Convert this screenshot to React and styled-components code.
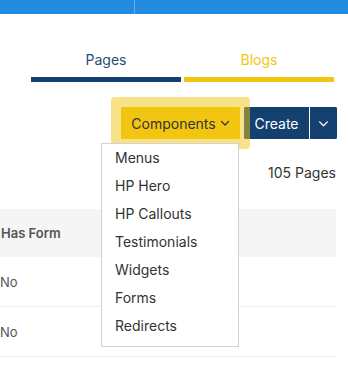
import React from "react";
import styled, { createGlobalStyle } from "styled-components";

const GlobalStyle = createGlobalStyle`
  html, body { margin: 0; padding: 0; background: #fff; }
  body { font-family: Inter, "Noto Sans", Arial, sans-serif; color: #333; }
  * { box-sizing: border-box; }
`;

const TopBar = styled.div`
  display: flex;
  height: 14px;
  background: #238bdf;
`;

const TopSegment = styled.div`
  width: 135px;
  border-right: 1px solid rgba(255, 255, 255, 0.3);
`;

const Tabs = styled.div`
  display: flex;
  gap: 3px;
  margin-top: 36px;
  padding-left: 31px;
`;

const Tab = styled.div`
  width: 150px;
  text-align: center;
  font-size: 14px;
  line-height: 20px;
  padding-bottom: 7px;
  color: ${(p) => p.$color};
  border-bottom: 5px solid ${(p) => p.$bar};
`;

const Toolbar = styled.div`
  display: flex;
  justify-content: flex-end;
  gap: 4px;
  margin-top: 25px;
  padding-right: 11px;
`;

const DropWrap = styled.div`
  position: relative;
  z-index: 2;
`;

const ComponentsButton = styled.button`
  display: flex;
  align-items: center;
  justify-content: center;
  gap: 4px;
  width: 119px;
  height: 32px;
  border: none;
  border-radius: 1px;
  background: #f2c511;
  color: #333;
  font-family: inherit;
  font-size: 14px;
  box-shadow: 0 0 0 10px rgba(242, 197, 17, 0.5);
  padding: 0;
`;

const Menu = styled.ul`
  position: absolute;
  left: -20px;
  top: 36px;
  width: 138px;
  margin: 0;
  padding: 0 0 6px;
  list-style: none;
  background: #fff;
  border: 1px solid #d2d2d2;
`;

const MenuItem = styled.li`
  padding-left: 13px;
  font-size: 14px;
  line-height: 28px;
  color: #333;
`;

const SplitGroup = styled.div`
  display: flex;
  height: 32px;
  border-radius: 2px;
  overflow: hidden;
  background: #14406f;
`;

const NavyButton = styled.button`
  display: flex;
  align-items: center;
  justify-content: center;
  width: ${(p) => p.$w}px;
  height: 32px;
  border: none;
  border-left: ${(p) => (p.$divider ? "1px solid #fff" : "none")};
  background: #14406f;
  color: #fff;
  font-family: inherit;
  font-size: 14px;
  padding: 0;
`;

const CountRow = styled.div`
  margin-top: 24px;
  padding-right: 12px;
  text-align: right;
  font-size: 14px;
  line-height: 20px;
  color: #333;
`;

const Table = styled.div`
  width: 336px;
  margin-top: 26px;
`;

const HeaderRow = styled.div`
  display: flex;
  align-items: center;
  height: 48px;
  background: #f5f5f5;
  padding-left: 1px;
  font-size: 13px;
  font-weight: 600;
  color: #555;
`;

const Row = styled.div`
  display: flex;
  align-items: center;
  height: 50px;
  border-bottom: 1px solid #eeeeee;
  padding-left: 0;
  font-size: 13px;
  color: #555;
`;

const Chevron = ({ color = "currentColor", size = 10 }) => (
  <svg width={size} height={size} viewBox="0 0 10 10" fill="none">
    <path d="M1.5 3.5 L5 7 L8.5 3.5" stroke={color} strokeWidth="1.2" strokeLinecap="round" strokeLinejoin="round" />
  </svg>
);

const items = ["Menus", "HP Hero", "HP Callouts", "Testimonials", "Widgets", "Forms", "Redirects"];

export default function App() {
  return (
    <>
      <GlobalStyle />
      <TopBar>
        <TopSegment />
      </TopBar>
      <Tabs>
        <Tab $color="#2b4c78" $bar="#14406f">Pages</Tab>
        <Tab $color="#f2c511" $bar="#f2c511">Blogs</Tab>
      </Tabs>
      <Toolbar>
        <DropWrap>
          <ComponentsButton>
            Components <Chevron />
          </ComponentsButton>
          <Menu>
            {items.map((it) => (
              <MenuItem key={it}>{it}</MenuItem>
            ))}
          </Menu>
        </DropWrap>
        <SplitGroup>
          <NavyButton $w={65}>Create</NavyButton>
          <NavyButton $w={28} $divider>
            <Chevron color="#fff" size={11} />
          </NavyButton>
        </SplitGroup>
      </Toolbar>
      <CountRow>105 Pages</CountRow>
      <Table>
        <HeaderRow>Has Form</HeaderRow>
        <Row>No</Row>
        <Row>No</Row>
      </Table>
    </>
  );
}
